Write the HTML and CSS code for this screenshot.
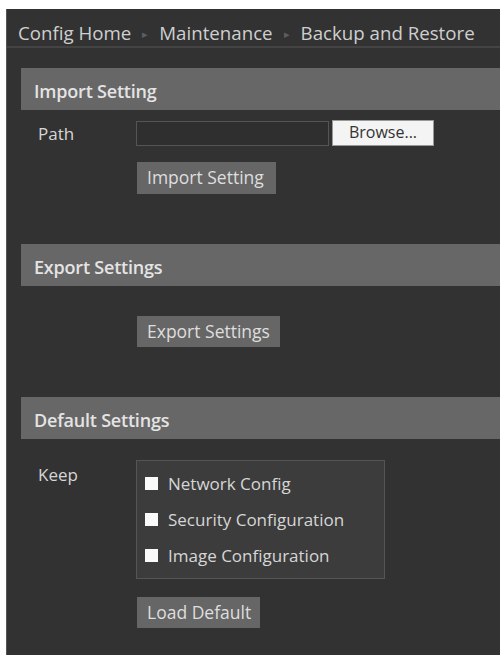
FILE: index.html
```html
<!DOCTYPE html>
<html lang="en">
<head>
  <meta charset="UTF-8">
  <title>Backup and Restore</title>
  <link rel="stylesheet" href="styles.css">
</head>
<body>
  <div class="panel">
    <div class="crumbs">
      <span>Config Home</span><span class="sep">&#9656;</span><span>Maintenance</span><span class="sep">&#9656;</span><span>Backup and Restore</span>
    </div>

    <!-- import -->
    <div class="section-head">Import Setting</div>
    <div class="row path-row">
      <div class="label">Path</div>
      <div class="field">
        <div class="file-input"></div>
        <div class="browse">Browse...</div>
      </div>
    </div>
    <div class="row">
      <div class="label"></div>
      <div class="btn btn-import">Import Setting</div>
    </div>

    <!-- export -->
    <div class="section-head">Export Settings</div>
    <div class="row export-row">
      <div class="label"></div>
      <div class="btn btn-export">Export Settings</div>
    </div>

    <!-- default -->
    <div class="section-head">Default Settings</div>
    <div class="row keep-row">
      <div class="label keep-label">Keep</div>
      <div class="keep-box">
        <div class="check"><span class="box"></span>Network Config</div>
        <div class="check"><span class="box"></span>Security Configuration</div>
        <div class="check"><span class="box"></span>Image Configuration</div>
      </div>
    </div>
    <div class="row load-row">
      <div class="label"></div>
      <div class="btn btn-load">Load Default</div>
    </div>
  </div>
</body>
</html>
```

FILE: styles.css
```css
body {
  margin: 0;
  background-color: #fff;
  font-family: "Open Sans", "Noto Sans", sans-serif;
}
.panel {
  margin: 9px 0 4px 6px;
  height: 646px;
  box-sizing: border-box;
  background-color: #323232;
  color: #d6d6d6;
  border-left: 1px solid #555;
}
.crumbs {
  height: 39px;
  box-sizing: border-box;
  padding: 11px 0 0 11px;
  font-size: 18.7px;
  line-height: 26px;
  color: #cfcfcf;
  border-bottom: 2px solid #444;
  white-space: nowrap;
}
.sep {
  color: #5e5e5e;
  font-size: 11px;
  margin: 0 11px;
  position: relative;
  top: -2px;
}
.section-head {
  margin-left: 14px;
  height: 42px;
  box-sizing: border-box;
  padding: 12px 0 0 13px;
  background-color: #676767;
  color: #e4e4e4;
  font-weight: 600;
  font-size: 18px;
  line-height: 22px;
  letter-spacing: -0.2px;
}
.crumbs + .section-head {
  margin-top: 20px;
}
.row {
  display: flex;
  margin-left: 14px;
}
.label {
  width: 115px;
  padding-left: 17px;
  box-sizing: border-box;
  font-size: 17px;
  flex-shrink: 0;
}
.path-row {
  margin-top: 10px;
  align-items: center;
}
.field {
  display: flex;
  align-items: center;
}
.file-input {
  width: 193px;
  height: 25px;
  box-sizing: border-box;
  border: 1px solid #555;
  background-color: #2f2f2f;
}
.browse {
  width: 102px;
  height: 26px;
  margin-left: 3px;
  box-sizing: border-box;
  border: 1px solid #999;
  background-color: #f4f4f4;
  color: #333;
  font-size: 16px;
  text-align: center;
  line-height: 23px;
}
.btn {
  height: 32px;
  box-sizing: border-box;
  padding: 0 10px;
  background-color: #666;
  color: #dedede;
  font-size: 17.5px;
  line-height: 31px;
  white-space: nowrap;
}
.btn-import {
  width: 139px;
  margin: 16px 0 50px 1px;
}
.export-row {
  margin-top: 30px;
  margin-bottom: 50px;
}
.btn-export {
  height: 31px;
  width: 143px;
  margin-left: 1px;
}
.keep-row {
  margin-top: 21px;
}
.keep-label {
  padding-left: 17px;
  padding-top: 3px;
}
.keep-box {
  width: 249px;
  height: 119px;
  box-sizing: border-box;
  padding: 11px 0 0 8px;
  background-color: #3c3c3c;
  border: 1px solid #555;
}
.check {
  display: flex;
  align-items: center;
  height: 22px;
  margin-bottom: 14px;
  font-size: 17px;
  white-space: nowrap;
}
.box {
  width: 13px;
  height: 13px;
  background-color: #fafafa;
  margin-right: 10px;
}
.load-row {
  margin-top: 18px;
}
.btn-load {
  height: 31px;
  width: 123px;
  margin-left: 1px;
}
```
